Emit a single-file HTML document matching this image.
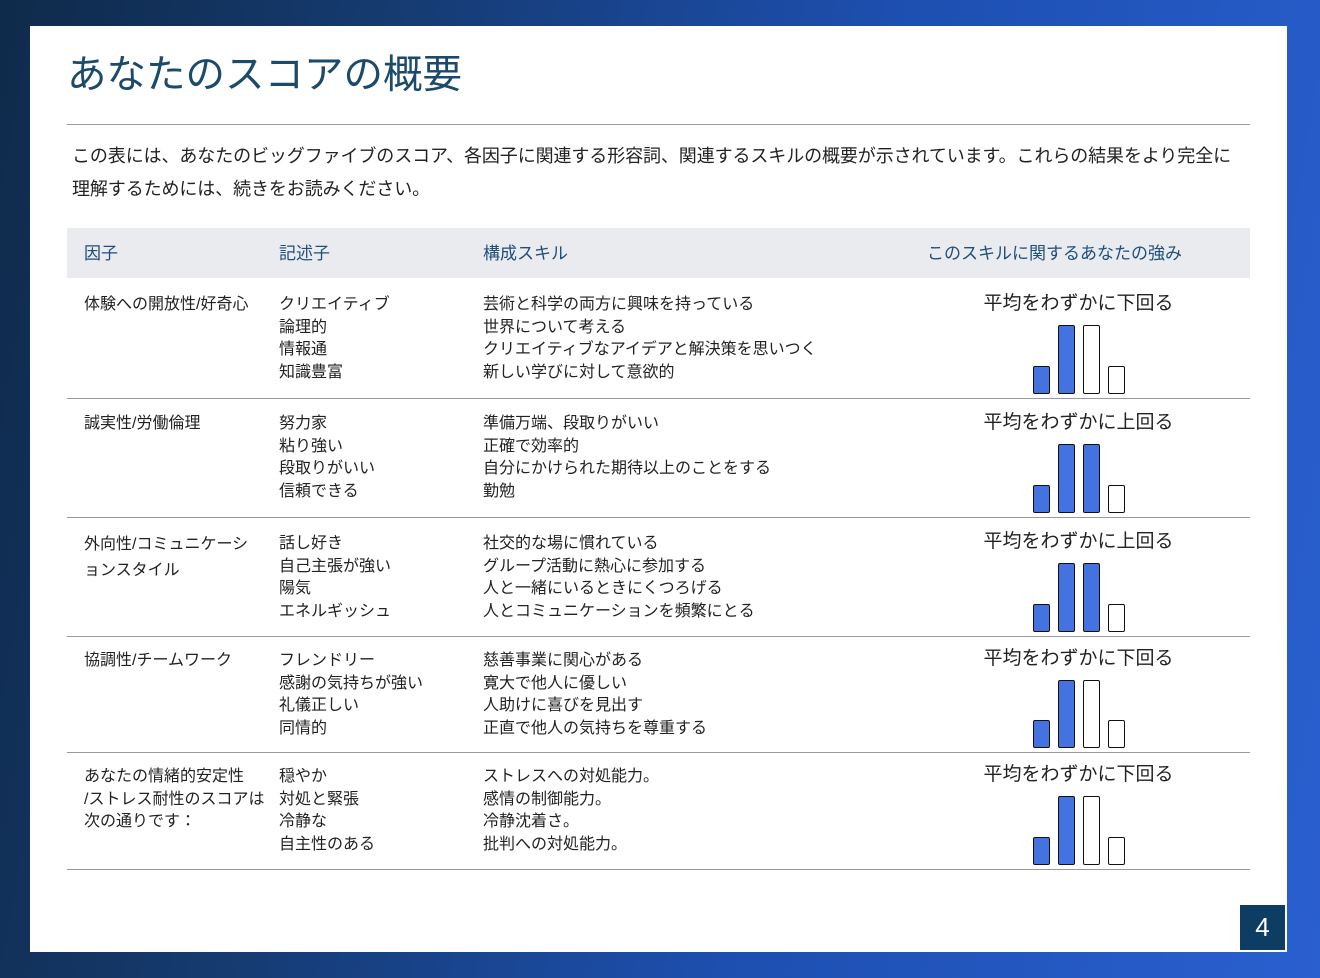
<!DOCTYPE html>
<html><head><meta charset="utf-8"><style>
body{margin:0;width:1320px;height:978px;overflow:hidden;font-family:"Liberation Sans","Noto Sans CJK JP",sans-serif;
background:linear-gradient(100deg,#0f2a4a 0%,#153a6e 25%,#1d4fb0 60%,#2a5fd0 100%);position:relative}
.card{position:absolute;left:30px;top:26px;width:1257px;height:926px;background:#fff}
h1{position:absolute;left:67px;top:50px;margin:0;font-size:39.5px;font-weight:400;color:#1b4a6b;line-height:50px}
.hr{position:absolute;left:67px;width:1183px;height:1px;background:#9a9a9a}
.p{position:absolute;left:72px;font-size:18px;color:#222;line-height:33px;top:140px;width:1180px;letter-spacing:-0.1px}
.hd{position:absolute;left:67px;top:228px;width:1183px;height:50px;background:#e9ebee}
.hd span{position:absolute;top:11px;font-size:17px;color:#1f4e79}
.t{position:absolute;font-size:16px;line-height:22.6px;color:#222}
.lbl{position:absolute;left:980px;width:197px;text-align:center;font-size:19px;color:#222}
.bar{position:absolute;width:15px;border:1.5px solid #111;border-radius:2px;background:#fff}
.f{background:#4472e0}
.pg{position:absolute;left:1240px;top:905px;width:45px;height:45px;background:#0e3d63;color:#fff;font-size:26px;text-align:center;line-height:45px}
</style></head><body>
<div class="card"></div>
<h1>あなたのスコアの概要</h1>
<div class="hr" style="top:124px"></div>
<div class="p">この表には、あなたのビッグファイブのスコア、各因子に関連する形容詞、関連するスキルの概要が示されています。これらの結果をより完全に<br>理解するためには、続きをお読みください。</div>
<div class="hd"><span style="left:17px">因子</span><span style="left:212px">記述子</span><span style="left:416px">構成スキル</span><span style="left:860px">このスキルに関するあなたの強み</span></div>

<div class="t" style="left:84px;top:294px">体験への開放性/好奇心</div>
<div class="t" style="left:279px;top:294px">クリエイティブ<br>論理的<br>情報通<br>知識豊富</div>
<div class="t" style="left:483px;top:294px">芸術と科学の両方に興味を持っている<br>世界について考える<br>クリエイティブなアイデアと解決策を思いつく<br>新しい学びに対して意欲的</div>
<div class="hr" style="top:398px"></div>

<div class="t" style="left:84px;top:413px">誠実性/労働倫理</div>
<div class="t" style="left:279px;top:413px">努力家<br>粘り強い<br>段取りがいい<br>信頼できる</div>
<div class="t" style="left:483px;top:413px">準備万端、段取りがいい<br>正確で効率的<br>自分にかけられた期待以上のことをする<br>勤勉</div>
<div class="hr" style="top:517px"></div>

<div class="t" style="left:84px;top:532px;line-height:26px">外向性/コミュニケーシ<br>ョンスタイル</div>
<div class="t" style="left:279px;top:533px">話し好き<br>自己主張が強い<br>陽気<br>エネルギッシュ</div>
<div class="t" style="left:483px;top:533px">社交的な場に慣れている<br>グループ活動に熱心に参加する<br>人と一緒にいるときにくつろげる<br>人とコミュニケーションを頻繁にとる</div>
<div class="hr" style="top:636px"></div>

<div class="t" style="left:84px;top:650px">協調性/チームワーク</div>
<div class="t" style="left:279px;top:650px">フレンドリー<br>感謝の気持ちが強い<br>礼儀正しい<br>同情的</div>
<div class="t" style="left:483px;top:650px">慈善事業に関心がある<br>寛大で他人に優しい<br>人助けに喜びを見出す<br>正直で他人の気持ちを尊重する</div>
<div class="hr" style="top:752px"></div>

<div class="t" style="left:84px;top:766px">あなたの情緒的安定性<br>/ストレス耐性のスコアは<br>次の通りです：</div>
<div class="t" style="left:279px;top:766px">穏やか<br>対処と緊張<br>冷静な<br>自主性のある</div>
<div class="t" style="left:483px;top:766px">ストレスへの対処能力。<br>感情の制御能力。<br>冷静沈着さ。<br>批判への対処能力。</div>
<div class="hr" style="top:869px"></div>

<div class="lbl" style="top:288px">平均をわずかに下回る</div>
<div class="bar f" style="left:1033px;top:366px;height:26px"></div>
<div class="bar f" style="left:1058px;top:325px;height:67px"></div>
<div class="bar" style="left:1083px;top:325px;height:67px"></div>
<div class="bar" style="left:1108px;top:366px;height:26px"></div>

<div class="lbl" style="top:407px">平均をわずかに上回る</div>
<div class="bar f" style="left:1033px;top:485px;height:26px"></div>
<div class="bar f" style="left:1058px;top:444px;height:67px"></div>
<div class="bar f" style="left:1083px;top:444px;height:67px"></div>
<div class="bar" style="left:1108px;top:485px;height:26px"></div>

<div class="lbl" style="top:526px">平均をわずかに上回る</div>
<div class="bar f" style="left:1033px;top:604px;height:26px"></div>
<div class="bar f" style="left:1058px;top:563px;height:67px"></div>
<div class="bar f" style="left:1083px;top:563px;height:67px"></div>
<div class="bar" style="left:1108px;top:604px;height:26px"></div>

<div class="lbl" style="top:643px">平均をわずかに下回る</div>
<div class="bar f" style="left:1033px;top:720px;height:26px"></div>
<div class="bar f" style="left:1058px;top:680px;height:66px"></div>
<div class="bar" style="left:1083px;top:680px;height:66px"></div>
<div class="bar" style="left:1108px;top:720px;height:26px"></div>

<div class="lbl" style="top:759px">平均をわずかに下回る</div>
<div class="bar f" style="left:1033px;top:837px;height:26px"></div>
<div class="bar f" style="left:1058px;top:796px;height:67px"></div>
<div class="bar" style="left:1083px;top:796px;height:67px"></div>
<div class="bar" style="left:1108px;top:837px;height:26px"></div>

<div class="pg">4</div>
</body></html>
